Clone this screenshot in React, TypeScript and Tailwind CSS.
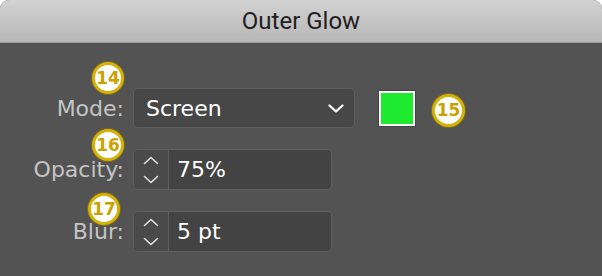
const badge =
  "absolute flex items-center justify-center rounded-full bg-white border-[3px] border-[#d4b20a] text-[#c9a200] font-bold text-[17px] leading-none shadow-[0_0_0_1px_#7a6a20]";

function Chevron({ up }: { up?: boolean }) {
  return (
    <svg width="16" height="9" viewBox="0 0 16 9" fill="none" stroke="#e2e2e2" strokeWidth="1.6" strokeLinecap="round" strokeLinejoin="round">
      <path d={up ? "M1.5 7.5L8 1.5L14.5 7.5" : "M1.5 1.5L8 7.5L14.5 1.5"} />
    </svg>
  );
}

function Stepper({ value }: { value: string }) {
  return (
    <div className="flex h-[41px] w-[199px] rounded-[5px] border border-[#5e5e5e] overflow-hidden">
      <div className="flex w-[35px] flex-col items-center justify-center gap-[10px] bg-[#4a4a4a] border-r border-[#5e5e5e]">
        <Chevron up />
        <Chevron />
      </div>
      <div className="flex flex-1 items-center bg-[#434343] pl-[8px] text-white text-[22px]">{value}</div>
    </div>
  );
}

export default function App() {
  return (
    <div
      className="relative w-[602px] h-[276px] bg-[#535353] overflow-hidden rounded-t-[9px]"
      style={{ fontFamily: '"DejaVu Sans", sans-serif' }}
    >
      {/* Title bar */}
      <div className="flex h-[43px] items-center justify-center border-b border-[#9d9d9d] bg-gradient-to-b from-[#d2d2d2] to-[#b7b7b7]">
        <span className="text-[24px] text-[#1f1f1f]" style={{ fontFamily: "Roboto, sans-serif" }}>
          Outer Glow
        </span>
      </div>

      {/* Body */}
      <div className="grid grid-cols-[124px_auto] content-start gap-x-[9px] gap-y-[21px] pt-[45px]">
        <div className="flex h-[40px] items-center justify-end text-[22px] text-[#c4c4c4]">Mode:</div>
        <div className="flex items-center">
          <div className="flex h-[40px] w-[222px] items-center justify-between rounded-[5px] border border-[#5e5e5e] bg-[#474747] pl-[12px] pr-[10px] text-white text-[22px]">
            <span>Screen</span>
            <svg width="16" height="9" viewBox="0 0 16 9" fill="none" stroke="#ffffff" strokeWidth="2.2" strokeLinecap="round" strokeLinejoin="round">
              <path d="M1.5 1.5L8 7.5L14.5 1.5" />
            </svg>
          </div>
          <div className="ml-[23px] h-[37px] w-[38px] border border-[#444] bg-white p-[2px]">
            <div className="h-full w-full bg-[#1eea30]" />
          </div>
        </div>

        <div className="flex h-[41px] items-center justify-end text-[22px] text-[#c4c4c4]">Opacity:</div>
        <Stepper value="75%" />

        <div className="flex h-[41px] items-center justify-end text-[22px] text-[#c4c4c4]">Blur:</div>
        <Stepper value="5 pt" />
      </div>

      {/* Annotation badges */}
      <div className={`${badge} left-[92px] top-[62px] w-[32px] h-[32px]`}>14</div>
      <div className={`${badge} left-[432px] top-[94px] w-[33px] h-[33px]`}>15</div>
      <div className={`${badge} left-[92px] top-[129px] w-[32px] h-[32px]`}>16</div>
      <div className={`${badge} left-[88px] top-[193px] w-[32px] h-[32px]`}>17</div>
    </div>
  );
}
